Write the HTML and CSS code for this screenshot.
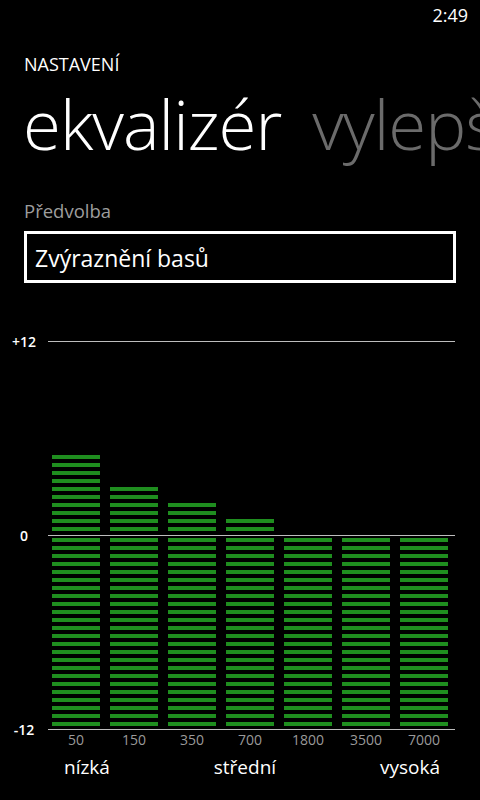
FILE: index.html
```html
<!DOCTYPE html>
<html lang="cs">
<head>
  <meta charset="UTF-8">
  <meta name="viewport" content="width=device-width, initial-scale=1.0">
  <title>Ekvalizér</title>
  <link rel="stylesheet" href="styles.css">
</head>
<body>
  <div class="page">
    <div class="status-bar"><span class="clock">2:49</span></div>

    <div class="app-title">NASTAVENÍ</div>
    <div class="pivot">
      <span class="pivot-item active">ekvalizér</span>
      <span class="pivot-item">vylepšení</span>
    </div>

    <div class="field-label">Předvolba</div>
    <div class="picker">Zvýraznění basů</div>

    <div class="graph">
      <span class="axis-label">+12</span>
      <div class="line"></div>

      <span></span>
      <div class="half upper">
        <div class="bar" style="height:78px"></div>
        <div class="bar" style="height:46px"></div>
        <div class="bar" style="height:30px"></div>
        <div class="bar" style="height:14px"></div>
        <div class="bar" style="height:0"></div>
        <div class="bar" style="height:0"></div>
        <div class="bar" style="height:0"></div>
      </div>

      <span class="axis-label">0</span>
      <div class="line"></div>

      <span></span>
      <div class="half lower">
        <div class="bar"></div>
        <div class="bar"></div>
        <div class="bar"></div>
        <div class="bar"></div>
        <div class="bar"></div>
        <div class="bar"></div>
        <div class="bar"></div>
      </div>

      <span class="axis-label">-12</span>
      <div class="line"></div>
    </div>

    <div class="freqs">
      <span>50</span>
      <span>150</span>
      <span>350</span>
      <span>700</span>
      <span>1800</span>
      <span>3500</span>
      <span>7000</span>
    </div>

    <div class="ranges">
      <span>nízká</span>
      <span>střední</span>
      <span>vysoká</span>
    </div>
  </div>
</body>
</html>
```

FILE: styles.css
```css
body{
  margin: 0;
  padding: 0;
  background: #000;
}
.page{
  width: 480px;
  height: 800px;
  overflow: hidden;
  background: #000;
  color: #fff;
  font-family: 'Open Sans', 'Noto Sans', sans-serif;
}
.status-bar{
  display: flex;
  justify-content: flex-end;
  height: 32px;
  padding-right: 12px;
}
.clock{
  font-size: 18px;
  line-height: 30px;
}
.app-title{
  margin: 20px 0 0 24px;
  font-size: 18px;
  line-height: 24px;
}
.pivot{
  display: flex;
  gap: 31px;
  margin: 4px 0 0 23px;
  white-space: nowrap;
  font-size: 69px;
  font-weight: 300;
  line-height: 86px;
  letter-spacing: -1px;
}
.pivot-item{
  color: #6b6b6b;
}
.pivot-item.active{
  color: #fff;
}
.field-label{
  margin: 32px 0 0 24px;
  font-size: 18.5px;
  line-height: 26px;
  color: #9d9d9d;
}
.picker{
  box-sizing: border-box;
  width: 432px;
  height: 52px;
  margin: 7px 0 0 24px;
  padding-left: 8px;
  border: 3px solid #fff;
  font-size: 23px;
  line-height: 48px;
}
.graph{
  display: grid;
  grid-template-columns: 48px 407px;
  grid-template-rows: 1px 193px 1px 193px 1px;
  margin-top: 58px;
}
.axis-label{
  align-self: center;
  text-align: center;
  font-size: 14px;
  font-weight: 600;
  line-height: 20px;
}
.line{
  background: #bdbdbd;
}
.half{
  display: flex;
  gap: 10px;
  padding-left: 4px;
}
.upper{
  align-items: flex-end;
}
.upper .bar{
  margin-bottom: 2px;
}
.lower .bar{
  height: 188px;
  margin-top: 2px;
}
.bar{
  width: 48px;
  background: repeating-linear-gradient(to bottom, #1f8e1f 0, #1f8e1f 4px, transparent 4px, transparent 8px);
}
.freqs{
  display: flex;
  gap: 10px;
  padding-left: 52px;
}
.freqs span{
  width: 48px;
  text-align: center;
  font-size: 14px;
  line-height: 20px;
  color: #9a9a9a;
}
.ranges{
  display: flex;
  justify-content: space-between;
  padding: 4px 40px 0 64px;
  font-size: 19px;
  line-height: 26px;
}
```
